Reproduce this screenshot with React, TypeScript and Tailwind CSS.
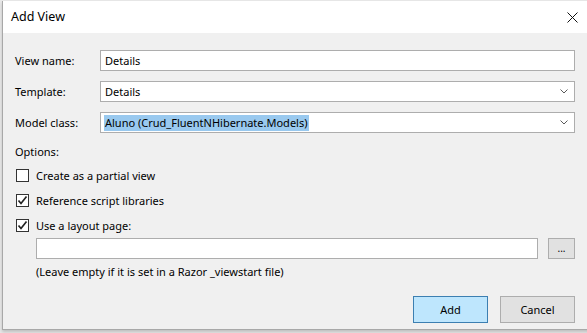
import React from 'react';

const font = { fontFamily: '"Noto Sans", "Open Sans", Arial, sans-serif' };

function Chevron() {
  return (
    <svg width="8" height="5" viewBox="0 0 8 5" className="shrink-0">
      <path d="M0.5 0.5 L4 4 L7.5 0.5" fill="none" stroke="#5a5a5a" strokeWidth="1" />
    </svg>
  );
}

function CheckBox({ checked }: { checked: boolean }) {
  return (
    <div className="w-[13px] h-[13px] border border-[#333333] bg-white flex items-center justify-center shrink-0">
      {checked && (
        <svg width="11" height="11" viewBox="0 0 11 11">
          <path d="M1.5 5.5 L4 8.5 L9.5 1.5" fill="none" stroke="#222222" strokeWidth="1.7" />
        </svg>
      )}
    </div>
  );
}

function FieldRow({ label, children }: { label: string; children: React.ReactNode }) {
  return (
    <div className="flex items-center h-[21px]">
      <div className="w-[85px] shrink-0">{label}</div>
      {children}
    </div>
  );
}

export default function App() {
  return (
    <div
      className="w-[587px] h-[333px] overflow-hidden bg-[#e8e8e8] pt-px text-[11px] text-black leading-[16px]"
      style={font}
    >
      <div className="ml-[2px] w-[590px] h-[329px] border-l border-b border-[#a8a8a8] bg-[#f0f0f0] shadow-[0_2px_3px_rgba(0,0,0,0.18)] flex flex-col">
        {/* TITLE BAR */}
        <div className="h-[32px] bg-white flex items-center justify-between pl-[8px] pr-[14px] shrink-0">
          <span className="text-[12.5px]">Add View</span>
          <svg width="11" height="11" viewBox="0 0 11 11">
            <path d="M0.5 0.5 L10.5 10.5 M10.5 0.5 L0.5 10.5" stroke="#111111" strokeWidth="1" />
          </svg>
        </div>

        {/* BODY */}
        <div className="flex flex-col pl-[12px] pt-[17px] w-[572px]">
          <div className="flex flex-col gap-[10px]">
            <FieldRow label="View name:">
              <div className="flex-1 h-[21px] bg-white border border-[#adadad] flex items-center pl-[4px]">
                Details
              </div>
            </FieldRow>
            <FieldRow label="Template:">
              <div className="flex-1 h-[21px] bg-white border border-[#adadad] flex items-center justify-between pl-[4px] pr-[6px]">
                <span>Details</span>
                <Chevron />
              </div>
            </FieldRow>
            <FieldRow label="Model class:">
              <div className="flex-1 h-[21px] bg-white border border-[#adadad] flex items-center justify-between pl-[3px] pr-[6px]">
                <span className="bg-[#99c9ef] px-[1px]">Aluno (Crud_FluentNHibernate.Models)</span>
                <Chevron />
              </div>
            </FieldRow>
          </div>

          <div className="mt-[11px] h-[16px]">Options:</div>

          <div className="flex flex-col mt-[3px]">
            <div className="flex items-center gap-[7px] h-[25px] pl-px">
              <CheckBox checked={false} />
              <span>Create as a partial view</span>
            </div>
            <div className="flex items-center gap-[7px] h-[25px] pl-px">
              <CheckBox checked />
              <span>Reference script libraries</span>
            </div>
            <div className="flex items-center gap-[7px] h-[25px] pl-px">
              <CheckBox checked />
              <span>Use a layout page:</span>
            </div>
          </div>

          <div className="flex items-center pl-[21px] gap-[10px]">
            <div className="flex-1 h-[21px] bg-white border border-[#adadad]" />
            <div className="w-[27px] h-[21px] bg-[#e1e1e1] border border-[#adadad] flex items-center justify-center text-[10px] leading-none pb-[2px]">
              ...
            </div>
          </div>

          <div className="mt-[5px] pl-[21px] h-[16px]">(Leave empty if it is set in a Razor _viewstart file)</div>

          <div className="flex justify-end gap-[12px] mt-[16px]">
            <div className="w-[75px] h-[27px] bg-[#bee6fd] border border-[#3c7fb1] flex items-center justify-center">
              Add
            </div>
            <div className="w-[75px] h-[27px] bg-[#e1e1e1] border border-[#adadad] flex items-center justify-center">
              Cancel
            </div>
          </div>
        </div>
      </div>
    </div>
  );
}
